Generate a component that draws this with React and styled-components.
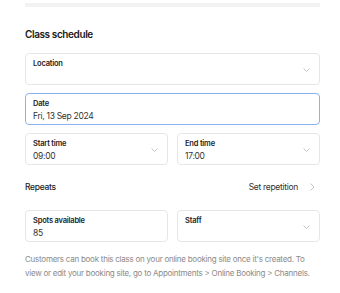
import styled, { createGlobalStyle } from "styled-components";

const Global = createGlobalStyle`
  body {
    margin: 0;
    background: #fff;
    font-family: Inter, "Noto Sans", sans-serif;
    color: #1a1a1a;
  }
`;

const Page = styled.div`
  width: 295px;
  padding: 3px 20px 0 25px;
`;

const TopBar = styled.div`
  height: 4px;
  background: #f2f2f2;
`;

const Title = styled.h2`
  margin: 20px 0 0;
  font-size: 10px;
  line-height: 14px;
  font-weight: 600;
  letter-spacing: -0.4px;
`;

const Stack = styled.div`
  display: flex;
  flex-direction: column;
  gap: 8px;
  margin-top: 12px;
`;

const Row = styled.div`
  display: grid;
  grid-template-columns: 1fr 1fr;
  gap: 9px;
`;

const Field = styled.div`
  position: relative;
  height: 32px;
  box-sizing: border-box;
  border: 1px solid ${(p) => (p.$focused ? "#8ab2f2" : "#e6e6e6")};
  border-radius: 4px;
  padding: 5px 7px 0;
`;

const Label = styled.div`
  font-size: 7.5px;
  line-height: 10px;
  font-weight: 600;
  color: #222;
  letter-spacing: -0.2px;
`;

const Value = styled.div`
  margin-top: 1px;
  font-size: 8.5px;
  line-height: 13px;
  color: #333;
  letter-spacing: -0.3px;
`;

const Chevron = styled.svg`
  position: absolute;
  right: 9px;
  top: 14px;
  width: 7px;
  height: 4px;
`;

const Down = () => (
  <Chevron viewBox="0 0 7 4">
    <path d="M0.5 0.5 L3.5 3.5 L6.5 0.5" fill="none" stroke="#bdbdbd" strokeWidth="0.9" />
  </Chevron>
);

const RepeatRow = styled.div`
  display: flex;
  align-items: center;
  justify-content: space-between;
  margin: 15px 0 16px;
  height: 14px;
`;

const RepeatLabel = styled.span`
  font-size: 8.5px;
  font-weight: 500;
  color: #222;
  letter-spacing: -0.3px;
`;

const SetLink = styled.span`
  display: flex;
  align-items: center;
  gap: 12px;
  font-size: 8.5px;
  color: #333;
  letter-spacing: -0.3px;
  padding-right: 5px;
`;

const Help = styled.p`
  margin: 10px 0 0;
  font-size: 8px;
  line-height: 14px;
  color: #8a8a8a;
  letter-spacing: -0.25px;
  white-space: nowrap;
`;

export default function App() {
  return (
    <>
      <Global />
      <Page>
        <TopBar />
        <Title>Class schedule</Title>
        <Stack>
          <Field>
            <Label>Location</Label>
            <Down />
          </Field>
          <Field $focused>
            <Label>Date</Label>
            <Value>Fri, 13 Sep 2024</Value>
          </Field>
          <Row>
            <Field>
              <Label>Start time</Label>
              <Value>09:00</Value>
              <Down />
            </Field>
            <Field>
              <Label>End time</Label>
              <Value>17:00</Value>
              <Down />
            </Field>
          </Row>
        </Stack>
        <RepeatRow>
          <RepeatLabel>Repeats</RepeatLabel>
          <SetLink>
            Set repetition
            <svg width="5" height="8" viewBox="0 0 5 8">
              <path d="M0.5 0.5 L4 4 L0.5 7.5" fill="none" stroke="#bdbdbd" strokeWidth="0.9" />
            </svg>
          </SetLink>
        </RepeatRow>
        <Row>
          <Field>
            <Label>Spots available</Label>
            <Value>85</Value>
          </Field>
          <Field>
            <Label>Staff</Label>
            <Down />
          </Field>
        </Row>
        <Help>
          Customers can book this class on your online booking site once it's created. To
          <br />
          view or edit your booking site, go to Appointments &gt; Online Booking &gt; Channels.
        </Help>
      </Page>
    </>
  );
}
